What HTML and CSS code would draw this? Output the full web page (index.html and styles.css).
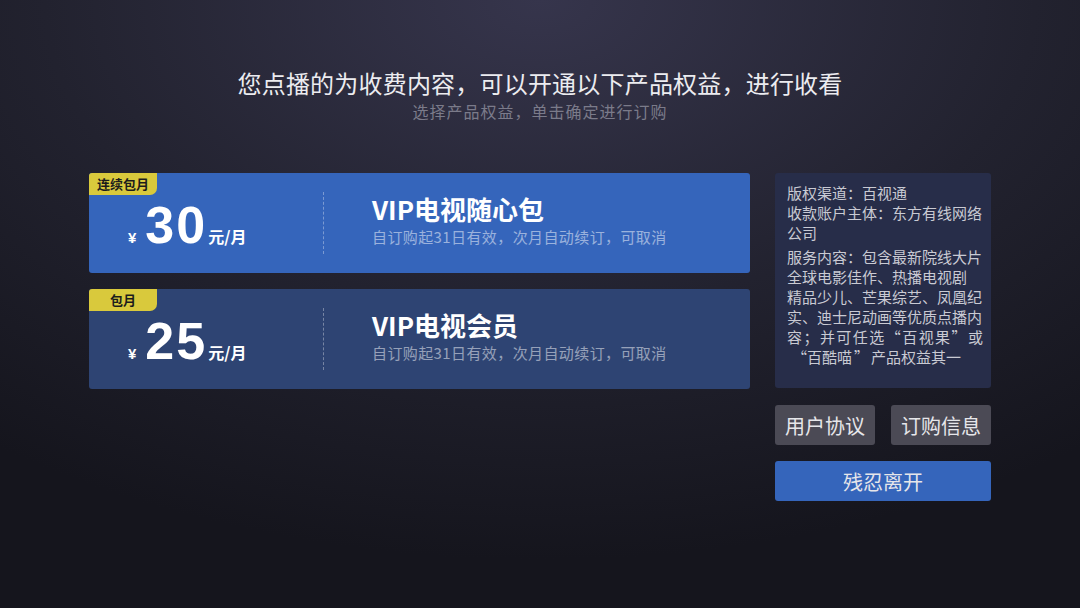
FILE: index.html
```html
<!DOCTYPE html>
<html lang="zh-CN">
<head>
  <meta charset="UTF-8">
  <title>产品订购</title>
  <link rel="stylesheet" href="styles.css">
</head>
<body>
  <div class="page">
    <div class="header">
      <h1>您点播的为收费内容，可以开通以下产品权益，进行收看</h1>
      <p class="sub-title">选择产品权益，单击确定进行订购</p>
    </div>

    <div class="main">
      <div class="product-list">
        <div class="product-card active">
          <span class="tag">连续包月</span>
          <div class="price">
            <span class="currency">¥</span>
            <span class="amount">30</span>
            <span class="unit">元/月</span>
          </div>
          <div class="product-info">
            <div class="product-name">VIP电视随心包</div>
            <div class="product-desc">自订购起31日有效，次月自动续订，可取消</div>
          </div>
        </div>

        <div class="product-card">
          <span class="tag">包月</span>
          <div class="price">
            <span class="currency">¥</span>
            <span class="amount">25</span>
            <span class="unit">元/月</span>
          </div>
          <div class="product-info">
            <div class="product-name">VIP电视会员</div>
            <div class="product-desc">自订购起31日有效，次月自动续订，可取消</div>
          </div>
        </div>
      </div>

      <div class="side">
        <div class="detail-card">
          <p>
            <span class="line">版权渠道：百视通</span>
            <span class="line">收款账户主体：东方有线网络</span>
            <span class="line">公司</span>
          </p>
          <p>
            <span class="line">服务内容：包含最新院线大片</span>
            <span class="line">全球电影佳作、热播电视剧</span>
            <span class="line">精品少儿、芒果综艺、凤凰纪</span>
            <span class="line">实、迪士尼动画等优质点播内</span>
            <span class="line justify">容；并可任选“百视果”或</span>
            <span class="line"><span class="quote open">“</span>百酷喵<span class="quote close">”</span>产品权益其一</span>
          </p>
        </div>
        <div class="button-group">
          <button class="grey-btn">用户协议</button>
          <button class="grey-btn">订购信息</button>
        </div>
        <button class="leave-btn">残忍离开</button>
      </div>
    </div>
  </div>
</body>
</html>
```

FILE: styles.css
```css
:root {
  --blue: #3565bb;
  --card-dark: #2e4473;
  --panel: #272d49;
  --grey-btn: #4b4a55;
  --tag: #d9c93c;
  --text: #ececf0;
  --muted: #7b7b8a;
}

* {
  box-sizing: border-box;
  margin: 0;
  padding: 0;
}

html, body {
  width: 1080px;
  height: 608px;
  overflow: hidden;
}

body {
  font-family: "Noto Sans CJK SC", "Noto Sans", sans-serif;
  color: var(--text);
  background: radial-gradient(ellipse 900px 560px at 50% 0%, #36354c 0%, #22222f 55%, #15151d 100%);
}

.page {
  padding-top: 66px;
}

.header {
  text-align: center;
}

h1 {
  font-size: 24px;
  font-weight: 400;
  line-height: 34px;
  letter-spacing: 0.2px;
  color: #ececf0;
}

.sub-title {
  font-size: 16px;
  line-height: 22px;
  letter-spacing: 1px;
  color: var(--muted);
}

.main {
  display: flex;
  justify-content: center;
  gap: 25px;
  margin-top: 51px;
}

.product-list {
  width: 661px;
  display: flex;
  flex-direction: column;
  gap: 16px;
}

.product-card {
  position: relative;
  height: 100px;
  border-radius: 3px;
  background-color: var(--card-dark);
  display: flex;
  align-items: center;
}

.product-card.active {
  background-color: var(--blue);
}

.tag {
  position: absolute;
  top: 0;
  left: 0;
  width: 68px;
  height: 22px;
  background-color: var(--tag);
  color: #1c1c1c;
  font-size: 13px;
  font-weight: 700;
  line-height: 22px;
  text-align: center;
  border-radius: 3px 0 7px 0;
}

.price {
  width: 235px;
  height: 62px;
  padding-left: 39px;
  padding-top: 6px;
  border-right: 1px dashed rgba(255, 255, 255, 0.35);
  display: flex;
  align-items: baseline;
  font-family: "Liberation Sans", "Noto Sans CJK SC", sans-serif;
  font-weight: 700;
  color: #fff;
}

.currency {
  font-size: 15px;
  margin-right: 9px;
}

.amount {
  font-size: 52px;
  line-height: 54px;
  letter-spacing: 2px;
}

.unit {
  font-family: "Noto Sans CJK SC", sans-serif;
  font-size: 16px;
  margin-left: 1px;
}

.product-info {
  padding-left: 48px;
  padding-bottom: 4px;
}

.product-name {
  font-size: 26px;
  font-weight: 700;
  line-height: 30px;
  color: #fff;
}

.product-desc {
  font-size: 15px;
  line-height: 22px;
  letter-spacing: 0.4px;
  margin-top: 2px;
  color: rgba(255, 255, 255, 0.5);
}

.side {
  width: 216px;
  display: flex;
  flex-direction: column;
}

.detail-card {
  height: 215px;
  background-color: var(--panel);
  border-radius: 3px;
  padding: 10px 8px 0 12px;
  font-size: 15px;
  line-height: 20px;
  color: #c9cad3;
  white-space: nowrap;
}

.detail-card p + p {
  margin-top: 4px;
}

.line {
  display: block;
}

.line.justify {
  text-align: justify;
  text-align-last: justify;
}

.quote {
  display: inline-block;
}

.quote.open {
  width: 20px;
  text-align: right;
}

.quote.close {
  width: 19px;
  text-align: center;
}

.button-group {
  display: flex;
  gap: 16px;
  margin-top: 17px;
}

button {
  font-family: "Noto Sans CJK SC", sans-serif;
  border: none;
  border-radius: 3px;
  height: 40px;
  font-size: 20px;
  color: #e6e6ea;
  cursor: pointer;
}

.grey-btn {
  flex: 1;
  background-color: var(--grey-btn);
}

.leave-btn {
  margin-top: 16px;
  width: 100%;
  background-color: var(--blue);
}
```
